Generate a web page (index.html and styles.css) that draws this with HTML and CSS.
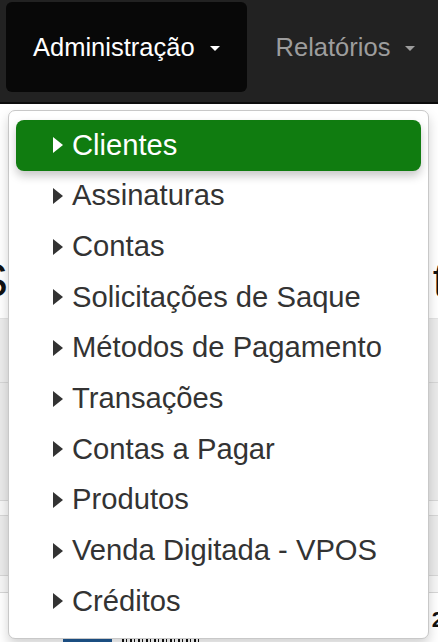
FILE: index.html
```html
<!DOCTYPE html>
<html lang="pt">
<head>
<meta charset="utf-8">
<title>Administração</title>
<link rel="stylesheet" href="styles.css">
</head>
<body>
<nav class="navbar">
  <ul class="nav">
    <li class="nav-item active"><a href="#">Administração<span class="caret"></span></a></li>
    <li class="nav-item"><a href="#">Relatórios<span class="caret"></span></a></li>
  </ul>
</nav>
<main class="page">
  <div class="crumb"><a href="#">e</a></div>
  <h1 class="title"><span class="title-left">S</span><span class="title-right">t</span></h1>
  <div class="table">
    <div class="row row-a"></div>
    <div class="row row-b"></div>
    <div class="row row-c"></div>
    <div class="row row-d"></div>
    <div class="row row-e"></div>
    <div class="row row-f">
      <span class="thumb"></span><span class="barcode"></span><span class="num">2</span>
    </div>
  </div>

  <ul class="dropdown">
    <li class="item active"><a href="#"><span class="tri"></span>Clientes</a></li>
    <li class="item"><a href="#"><span class="tri"></span>Assinaturas</a></li>
    <li class="item"><a href="#"><span class="tri"></span>Contas</a></li>
    <li class="item"><a href="#"><span class="tri"></span>Solicitações de Saque</a></li>
    <li class="item"><a href="#"><span class="tri"></span>Métodos de Pagamento</a></li>
    <li class="item"><a href="#"><span class="tri"></span>Transações</a></li>
    <li class="item"><a href="#"><span class="tri"></span>Contas a Pagar</a></li>
    <li class="item"><a href="#"><span class="tri"></span>Produtos</a></li>
    <li class="item"><a href="#"><span class="tri"></span>Venda Digitada - VPOS</a></li>
    <li class="item"><a href="#"><span class="tri"></span>Créditos</a></li>
  </ul>
</main>
</body>
</html>
```

FILE: styles.css
```css
* { box-sizing: border-box; }

html, body {
  margin: 0;
  padding: 0;
  overflow: hidden;
}

body {
  font-family: "Liberation Sans", Arial, Helvetica, sans-serif;
  background: #fff;
  width: 438px;
  height: 642px;
}

/* Navbar */
.navbar {
  height: 104px;
  background: #222;
  border-bottom: 2px solid #0c0c0c;
}

.nav {
  list-style: none;
  margin: 0;
  padding: 2px 0 0 6px;
  display: flex;
  gap: 2px;
}

.nav-item a {
  display: flex;
  align-items: center;
  height: 90px;
  padding: 0 27px;
  font-size: 25.5px;
  color: #9d9d9d;
  text-decoration: none;
  border-radius: 6px;
}

.nav-item.active a {
  background: #080808;
  color: #fff;
}

.caret {
  display: inline-block;
  width: 0;
  height: 0;
  margin-left: 15px;
  margin-top: 2px;
  border-top: 5px solid currentColor;
  border-left: 5px solid transparent;
  border-right: 5px solid transparent;
}

/* Page behind the menu */
.page {
  position: relative;
  height: 538px;
}

.crumb {
  height: 70px;
  padding-top: 66px;
  font-size: 14px;
  line-height: 14px;
  margin-left: -8px;
}

.crumb a {
  color: #2a6ebb;
  text-decoration: none;
}

.title {
  margin: 0;
  display: flex;
  justify-content: space-between;
  font-size: 48px;
  font-weight: normal;
  line-height: 50px;
  height: 144px;
  padding-top: 82px;
  color: #111;
}

.title-left { margin-left: -24px; }
.title-right { margin-right: -8px; }

.table {
  display: flex;
  flex-direction: column;
}

.row { border-top: 1px solid #d6d6d6; }
.row-a { height: 64px; background: #ececec; border-top-color: #e3e3e3; }
.row-b { height: 118px; background: #eaeaea; }
.row-c { height: 15px; background: #f6f6f6; }
.row-d { height: 60px; background: #ebebeb; }
.row-e { height: 17px; background: #f6f6f6; }
.row-f {
  height: 60px;
  background: #fff;
  display: flex;
  align-items: flex-start;
  position: relative;
}

.thumb {
  display: block;
  width: 49px;
  height: 30px;
  margin: 40px 0 0 63px;
  background: #1f5a95;
}

.barcode {
  display: block;
  width: 80px;
  height: 30px;
  margin: 40px 0 0 10px;
  background: repeating-linear-gradient(90deg, #111 0 2px, #fff 2px 4px, #111 4px 5px, #fff 5px 8px);
}

.num {
  margin-left: auto;
  margin-right: -6px;
  margin-top: 14px;
  font-size: 22px;
  font-weight: bold;
  color: #111;
}

/* Dropdown */
.dropdown {
  position: absolute;
  top: 6px;
  left: 8px;
  width: 421px;
  margin: 0;
  padding: 9px 7px 11px;
  list-style: none;
  background: #fff;
  border: 1px solid #c8c8c8;
  border-radius: 7px;
  box-shadow: 0 6px 12px rgba(0, 0, 0, 0.175);
}

.item a {
  display: flex;
  align-items: center;
  height: 50.67px;
  padding-left: 37px;
  font-size: 29.2px;
  color: #333;
  text-decoration: none;
  border-radius: 8px;
}

.item.active a {
  background: #107c10;
  color: #fff;
  box-shadow: 0 5px 10px rgba(0, 0, 0, 0.22);
}

.tri {
  display: inline-block;
  flex: none;
  width: 0;
  height: 0;
  margin-right: 9px;
  border-left: 10px solid currentColor;
  border-top: 8.5px solid transparent;
  border-bottom: 8.5px solid transparent;
}
```
